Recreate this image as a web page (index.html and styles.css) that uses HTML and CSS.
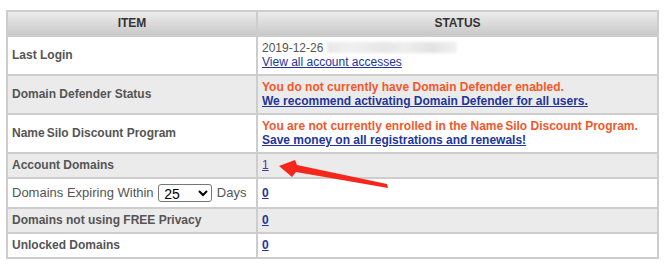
FILE: index.html
```html
<!DOCTYPE html>
<html lang="en">
<head>
    <meta charset="UTF-8">
    <meta name="viewport" content="width=device-width, initial-scale=1.0">
    <title>Account Overview</title>
    <link rel="stylesheet" href="styles.css">
</head>
<body>
    <div class="wrap">
        <table class="overview">
            <thead>
                <tr>
                    <th class="col-item">ITEM</th>
                    <th>STATUS</th>
                </tr>
            </thead>
            <tbody>
                <tr>
                    <td class="label">Last Login</td>
                    <td>2019-12-26 <span class="redacted"></span><br>
                        <a href="#" class="plain">View all account accesses</a></td>
                </tr>
                <tr class="alt">
                    <td class="label">Domain Defender Status</td>
                    <td><span class="warn">You do not currently have Domain Defender enabled.</span><br>
                        <a href="#">We recommend activating Domain Defender for all users.</a></td>
                </tr>
                <tr>
                    <td class="label"><span class="ns">Name</span>Silo Discount Program</td>
                    <td><span class="warn">You are not currently enrolled in the <span class="ns">Name</span>Silo Discount Program.</span><br>
                        <a href="#">Save money on all registrations and renewals!</a></td>
                </tr>
                <tr class="alt">
                    <td class="label">Account Domains</td>
                    <td><a href="#" class="plain visited">1</a></td>
                </tr>
                <tr>
                    <td class="label light">Domains Expiring Within
                        <select class="days">
                            <option>25</option>
                            <option>50</option>
                            <option>90</option>
                        </select>
                        Days</td>
                    <td><a href="#">0</a></td>
                </tr>
                <tr class="alt">
                    <td class="label">Domains not using FREE Privacy</td>
                    <td><a href="#">0</a></td>
                </tr>
                <tr>
                    <td class="label">Unlocked Domains</td>
                    <td><a href="#">0</a></td>
                </tr>
            </tbody>
        </table>

        <!-- annotation arrow pointing at the domain count -->
        <svg class="arrow" width="120" height="40" viewBox="272 152 120 40">
            <polygon points="279,166 295,160 297,165 387,184 388,188 296,172 292,177" fill="#f5271c"/>
        </svg>
    </div>
</body>
</html>
```

FILE: styles.css
```css
body {
    font-family: "Liberation Sans", Arial, sans-serif;
    font-size: 12px;
    margin: 0;
    padding: 0;
    background: #fff;
}

.wrap {
    position: relative;
    padding: 10px 0 0 6px;
}

.overview {
    width: 653px;
    border: 1px solid #cdcdcd;
    border-collapse: separate;
    border-spacing: 0;
    line-height: 14px;
    color: #555;
}

.overview th,
.overview td {
    border: 1px solid #cdcdcd;
    padding: 4px 4px 5px;
    text-align: left;
    vertical-align: middle;
}

.overview th {
    text-align: center;
    color: #333;
    font-weight: bold;
    background: linear-gradient(#ececec, #c9c9c9);
}

.col-item {
    width: 240px;
}

.alt td {
    background: #ebebeb;
}

.label {
    font-weight: bold;
}

.label.light {
    font-weight: normal;
    font-size: 13px;
    line-height: 18px;
    padding-top: 5px;
    padding-bottom: 5px;
}

.ns {
    margin-right: 2px;
}

.warn {
    color: #f2582a;
    font-weight: bold;
}

.overview a {
    color: #23359a;
    font-weight: bold;
}

.overview a.plain {
    font-weight: normal;
}

.overview a.visited {
    color: #5a2ea6;
}

.redacted {
    display: inline-block;
    width: 130px;
    height: 11px;
    vertical-align: -1px;
    background: linear-gradient(90deg, #e9e9e9 0%, #f0f0f0 20%, #e6e6e6 45%, #eeeeee 60%, #e2e2e2 80%, #f2f2f2 100%);
    filter: blur(1.5px);
}

.days {
    box-sizing: border-box;
    width: 54px;
    height: 18px;
    margin: 0 1px;
    padding: 0 0 0 1px;
    font-family: Arial, "Liberation Sans", sans-serif;
    font-size: 14px;
    color: #000;
    border: 1px solid #767676;
    border-radius: 3px;
    background: #fff;
    vertical-align: top;
}

.arrow {
    position: absolute;
    left: 272px;
    top: 152px;
}
```
